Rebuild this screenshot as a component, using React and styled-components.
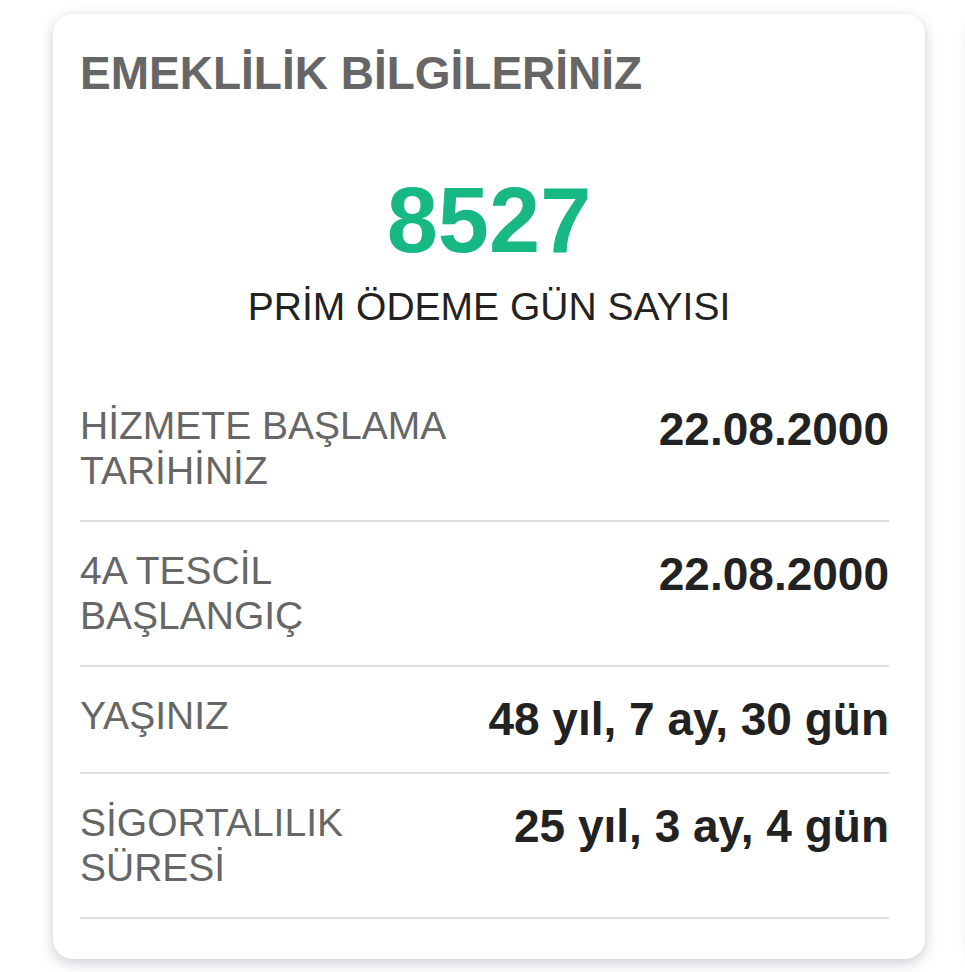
import React from 'react'
import styled, { createGlobalStyle } from 'styled-components';

const GlobalStyle = createGlobalStyle`
    html, body {
        margin: 0;
        padding: 0;
        background: #ffffff;
        font-family: "Liberation Sans", Arial, Helvetica, sans-serif;
    }
`

const Track = styled.div`
    display: flex;
    gap: 46px;
    padding: 14px 0 14px 53px;
    width: 965px;
    box-sizing: border-box;
    overflow: hidden;
`

const Card = styled.section`
    flex: 0 0 872px;
    box-sizing: border-box;
    background: #ffffff;
    border-radius: 20px;
    padding: 33px 36px 40px 27px;
    box-shadow: 0 4px 14px rgba(70, 74, 100, 0.28);
`

const Heading = styled.h2`
    margin: 0;
    font-size: 46px;
    line-height: 1.15;
    font-weight: 700;
    color: #666666;
`

const Summary = styled.div`
    display: flex;
    flex-direction: column;
    align-items: center;
    margin: 68px -9px 47px 0;
`

const BigNumber = styled.span`
    font-size: 92px;
    line-height: 1.15;
    font-weight: 700;
    color: #17b883;
`

const Caption = styled.span`
    margin-top: 11px;
    font-size: 39px;
    line-height: 1.15;
    color: #222222;
`

const Row = styled.div`
    display: flex;
    justify-content: space-between;
    align-items: flex-start;
    gap: 24px;
    padding: 26px 0 27px;
    border-bottom: 2px solid #dddddd;
`

const Label = styled.span`
    font-size: 39px;
    line-height: 45px;
    color: #666666;
    max-width: ${p => p.$narrow ? '300px' : '400px'};
`

const Value = styled.span`
    font-size: 46px;
    line-height: 1.15;
    font-weight: 700;
    color: #222222;
    white-space: nowrap;
    text-align: right;
`

const rows = [
    { label: 'HİZMETE BAŞLAMA TARİHİNİZ', value: '22.08.2000' },
    { label: '4A TESCİL BAŞLANGIÇ', value: '22.08.2000', narrow: true },
    { label: 'YAŞINIZ', value: '48 yıl, 7 ay, 30 gün' },
    { label: 'SİGORTALILIK SÜRESİ', value: '25 yıl, 3 ay, 4 gün', narrow: true },
]

function InfoCard() {
    return (
        <Card>
            <Heading>EMEKLİLİK BİLGİLERİNİZ</Heading>
            <Summary>
                <BigNumber>8527</BigNumber>
                <Caption>PRİM ÖDEME GÜN SAYISI</Caption>
            </Summary>
            {rows.map(r => (
                <Row key={r.label}>
                    <Label $narrow={r.narrow}>{r.label}</Label>
                    <Value>{r.value}</Value>
                </Row>
            ))}
        </Card>
    )
}

export default function App() {
    return (
        <>
            <GlobalStyle />
            <Track>
                <InfoCard />
                {/* next slide of the carousel, only its edge peeks in */}
                <Card aria-hidden="true" />
            </Track>
        </>
    )
}
